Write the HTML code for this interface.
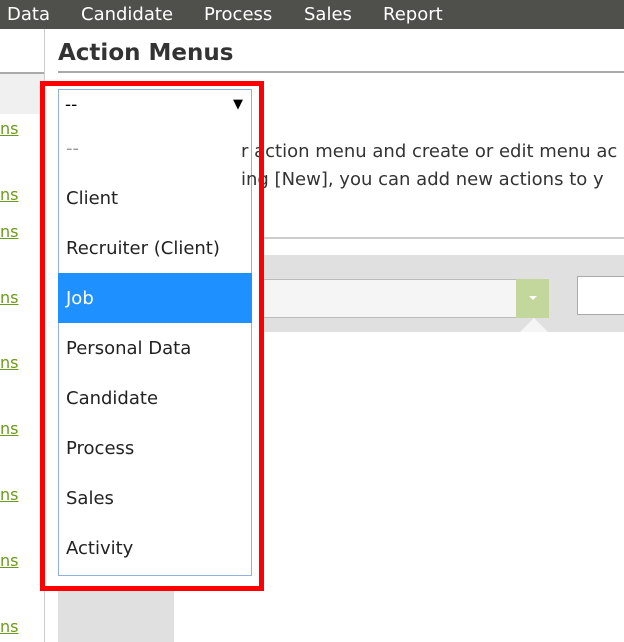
<!DOCTYPE html>
<html><head><style>
body{margin:0;width:624px;height:642px;position:relative;overflow:hidden;background:#fff;font-family:"DejaVu Sans","Liberation Sans",sans-serif;}
.a{position:absolute}
.nav{left:0;top:0;width:624px;height:29px;background:#4f4f4b;color:#fff;font-size:18px;line-height:30px}
.nav span{position:absolute;top:0}
.lk{left:0;color:#6a9a1a;font-size:16px;text-decoration:underline;line-height:20px}
.item{position:absolute;left:0;width:194px;height:50px;line-height:52px;padding-left:7px;box-sizing:border-box;font-size:18px;color:#222}
</style></head><body>
<div class="a nav"><span style="left:7px">Data</span><span style="left:81px">Candidate</span><span style="left:204px">Process</span><span style="left:304px">Sales</span><span style="left:383px">Report</span></div>
<div class="a" style="left:44px;top:29px;width:1px;height:613px;background:#ccc"></div>
<div class="a" style="left:0;top:72px;width:44px;height:2px;background:#aaa"></div>
<div class="a" style="left:0;top:74px;width:44px;height:40px;background:#f0f0f0"></div>
<div class="a lk" style="top:119px">ns</div>
<div class="a lk" style="top:185px">ns</div>
<div class="a lk" style="top:222px">ns</div>
<div class="a lk" style="top:288px">ns</div>
<div class="a lk" style="top:353px">ns</div>
<div class="a lk" style="top:419px">ns</div>
<div class="a lk" style="top:485px">ns</div>
<div class="a lk" style="top:551px">ns</div>
<div class="a lk" style="top:617px">ns</div>
<div class="a" style="left:58px;top:40px;font-size:23px;font-weight:bold;color:#333">Action Menus</div>
<div class="a" style="left:58px;top:71px;width:566px;height:2px;background:#aaa"></div>
<div class="a" style="left:252px;top:237px;width:372px;height:2px;background:#ccc"></div>
<div class="a" style="left:58px;top:255px;width:566px;height:77px;background:#e0e0e0"></div>
<div class="a" style="left:58px;top:332px;width:116px;height:310px;background:#e0e0e0"></div>
<div class="a" style="left:252px;top:279px;width:264px;height:39px;background:#f5f5f5;border-top:1px solid #bbb;border-bottom:1px solid #bbb;box-sizing:border-box"></div>
<div class="a" style="left:516px;top:279px;width:33px;height:39px;background:#c3d69b"></div>
<div class="a" style="left:529px;top:296px;width:0;height:0;border-left:4px solid transparent;border-right:4px solid transparent;border-top:4px solid #fff"></div>
<div class="a" style="left:520px;top:318px;width:0;height:0;border-left:14px solid transparent;border-right:14px solid transparent;border-bottom:14px solid #f5f5f5"></div>
<div class="a" style="left:577px;top:276px;width:60px;height:39px;background:#fff;border:1px solid #aaa;box-sizing:border-box"></div>
<div class="a" style="left:40px;top:81px;width:224px;height:510px;border:5px solid #f00;box-sizing:border-box;background:#fff"></div>
<div class="a" style="left:58px;top:89px;width:194px;height:33px;border:1px solid #8fb0e0;box-sizing:border-box;background:#fff;font-size:17px;line-height:30px;padding-left:6px">--<span style="position:absolute;right:8px;top:0;font-size:13px">▼</span></div>
<div class="a" style="left:58px;top:121px;width:194px;height:455px;border:1px solid #8fb0e0;border-top:none;box-sizing:border-box;background:#fff">
<div class="item" style="top:2px;color:#999">--</div>
<div class="item" style="top:52px">Client</div>
<div class="item" style="top:102px">Recruiter (Client)</div>
<div class="item" style="top:152px;left:-1px;width:194px;background:#1e90ff;color:#fff;padding-left:8px">Job</div>
<div class="item" style="top:202px">Personal Data</div>
<div class="item" style="top:252px">Candidate</div>
<div class="item" style="top:302px">Process</div>
<div class="item" style="top:352px">Sales</div>
<div class="item" style="top:402px">Activity</div>
</div>
<div class="a" style="left:241px;top:141px;font-size:18px;color:#333;white-space:nowrap;z-index:5">r action menu and create or edit menu ac</div>
<div class="a" style="left:241px;top:169px;font-size:18px;color:#333;white-space:nowrap;z-index:5">ing [New], you can add new actions to y</div>
<div class="a" style="left:259px;top:81px;width:5px;height:510px;background:#f00;z-index:6"></div>
</body></html>
